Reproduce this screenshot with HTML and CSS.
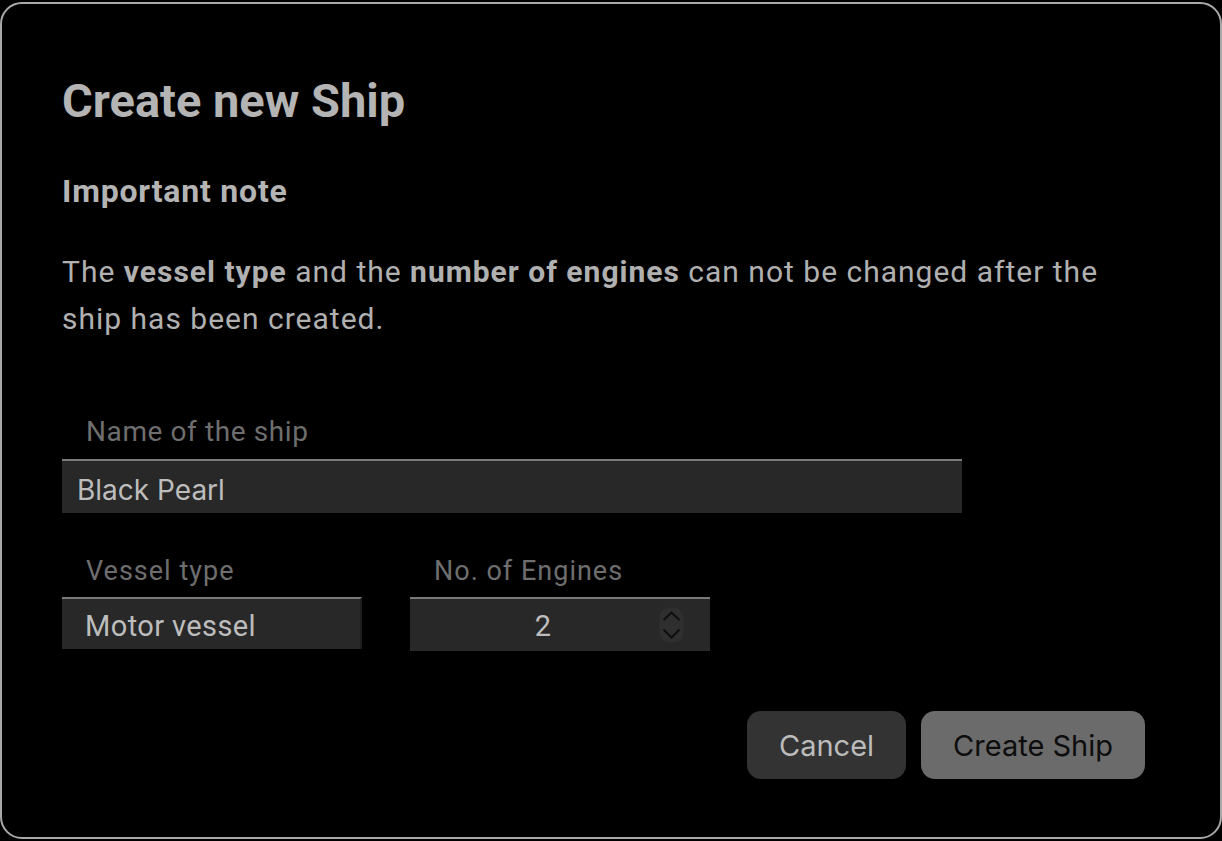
FILE: index.html
```html
<!DOCTYPE html>
<html lang="en">
<head>
    <meta charset="UTF-8">
    <meta name="viewport" content="width=device-width, initial-scale=1.0">
    <title>Create new Ship</title>
    <link rel="stylesheet" href="styles.css">
</head>
<body>
    <div class="dialog">
        <h1>Create new Ship</h1>
        <h2>Important note</h2>
        <p class="note">The <b>vessel type</b> and the <b>number of engines</b> can not be changed after the ship has been created.</p>

        <form class="ship-form">
            <label class="field field-wide">
                <span class="label label-name">Name of the ship</span>
                <input type="text" class="text-input" value="Black Pearl">
            </label>
            <div class="row">
                <div class="field">
                    <span class="label">Vessel type</span>
                    <div class="select">Motor vessel</div>
                </div>
                <div class="field">
                    <span class="label">No. of Engines</span>
                    <div class="number">
                        <span class="number-value">2</span>
                        <span class="spinner">
                            <svg width="25" height="36" viewBox="0 0 25 36">
                                <rect x="0.5" y="0.5" width="24" height="35" rx="10" fill="#2f2f2f"/>
                                <path d="M4.5 13 L12.5 5.5 L20.5 13" fill="none" stroke="#0e0e0e" stroke-width="2"/>
                                <path d="M4.5 22.5 L12.5 30.5 L20.5 22.5" fill="none" stroke="#0e0e0e" stroke-width="2"/>
                            </svg>
                        </span>
                    </div>
                </div>
            </div>
            <div class="actions">
                <button type="button" class="btn btn-cancel">Cancel</button>
                <button type="button" class="btn btn-create">Create Ship</button>
            </div>
        </form>
    </div>
</body>
</html>
```

FILE: styles.css
```css
* {
    box-sizing: border-box;
}

body {
    margin: 0;
    padding-top: 2px;
    background: #000;
    font-family: Roboto, "Noto Sans", sans-serif;
    color: #b3b3b3;
}

.dialog {
    height: 837px;
    border: 2px solid #a9a9a9;
    border-radius: 22px;
    background: #000;
    padding: 69px 60px 0 60px;
}

h1 {
    margin: 0;
    font-size: 47px;
    font-weight: 700;
    line-height: 56px;
    color: #b4b4b4;
}

h2 {
    margin: 42px 0 0;
    font-size: 32px;
    font-weight: 700;
    line-height: 40px;
    letter-spacing: 0.8px;
    color: #b4b4b4;
}

.note {
    margin: 37px 0 0;
    font-size: 30px;
    line-height: 47px;
    letter-spacing: 1px;
    color: #b0b0b0;
    max-width: 1080px;
}

.note b {
    font-weight: 700;
}

.ship-form {
    margin-top: 72px;
}

.field {
    display: flex;
    flex-direction: column;
    width: 300px;
}

.field-wide {
    width: 900px;
}

.label {
    padding-left: 24px;
    font-size: 27px;
    line-height: 36px;
    letter-spacing: 1px;
    color: #6e6e6e;
    margin-bottom: 8px;
}

.label-name {
    font-size: 28px;
    letter-spacing: 0.6px;
    margin-bottom: 9px;
}

.text-input,
.select,
.number {
    background: #282828;
    border: none;
    border-top: 2px solid #7a7a7a;
    color: #bdbdbd;
}

.text-input {
    width: 100%;
    height: 54px;
    padding: 6px 15px 0;
    font-family: Inter, sans-serif;
    font-size: 28px;
    outline: none;
}

.row {
    display: flex;
    gap: 48px;
    margin-top: 40px;
}

.select {
    height: 52px;
    padding: 10px 23px 0;
    font-size: 29px;
    line-height: 34px;
    letter-spacing: 0.4px;
    border-right: 2px solid #1e1e1e;
}

.number {
    position: relative;
    height: 54px;
    padding: 10px 34px 0 0;
    font-size: 29px;
    line-height: 34px;
    text-align: center;
}

.spinner {
    position: absolute;
    right: 26px;
    top: 8px;
    line-height: 0;
}

.actions {
    display: flex;
    justify-content: flex-end;
    gap: 15px;
    margin-top: 60px;
    padding-right: 15px;
}

.btn {
    height: 68px;
    border: none;
    border-radius: 14px;
    font-family: Inter, sans-serif;
    font-size: 29px;
    padding: 0 32px;
    cursor: pointer;
}

.btn-cancel {
    background: #333;
    color: #bcbcbc;
}

.btn-create {
    background: #6b6b6b;
    color: #0d0d0d;
}
```
